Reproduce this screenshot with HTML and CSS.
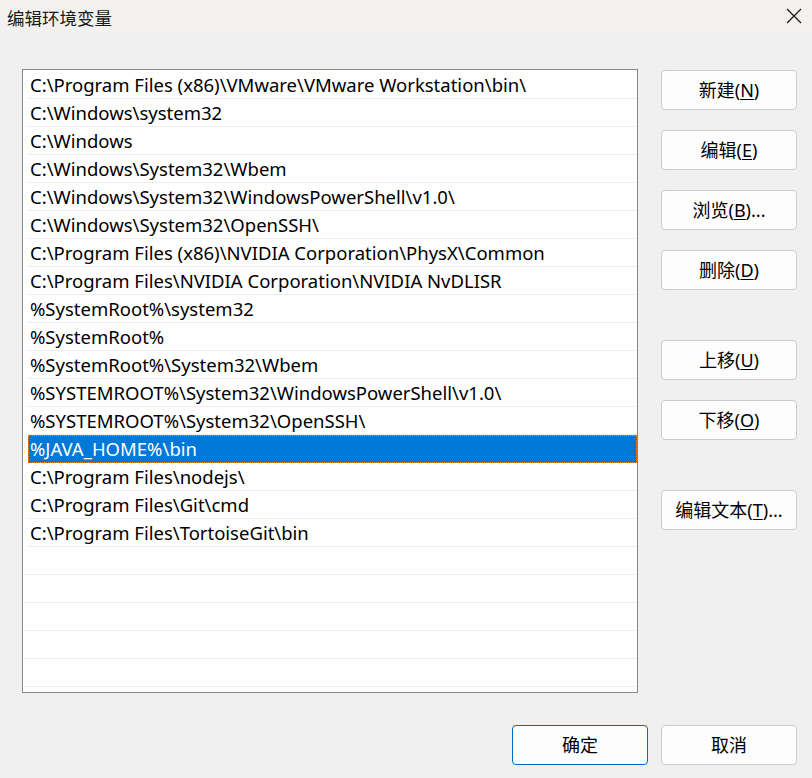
FILE: index.html
```html
<!DOCTYPE html>
<html lang="zh-CN">
<head>
    <meta charset="UTF-8">
    <meta name="viewport" content="width=device-width, initial-scale=1.0">
    <title>编辑环境变量</title>
    <link rel="stylesheet" href="styles.css">
</head>
<body>
    <div class="dialog">
        <div class="titlebar">
            <span class="title">编辑环境变量</span>
            <svg class="close" width="16" height="16" viewBox="0 0 16 16">
                <path d="M1 1 L15 15 M15 1 L1 15" stroke="#1a1a1a" stroke-width="1.3" fill="none"/>
            </svg>
        </div>

        <div class="content">
            <div class="path-list">
                <div class="row">C:\Program Files (x86)\VMware\VMware Workstation\bin\</div>
                <div class="row">C:\Windows\system32</div>
                <div class="row">C:\Windows</div>
                <div class="row">C:\Windows\System32\Wbem</div>
                <div class="row">C:\Windows\System32\WindowsPowerShell\v1.0\</div>
                <div class="row">C:\Windows\System32\OpenSSH\</div>
                <div class="row">C:\Program Files (x86)\NVIDIA Corporation\PhysX\Common</div>
                <div class="row">C:\Program Files\NVIDIA Corporation\NVIDIA NvDLISR</div>
                <div class="row">%SystemRoot%\system32</div>
                <div class="row">%SystemRoot%</div>
                <div class="row">%SystemRoot%\System32\Wbem</div>
                <div class="row">%SYSTEMROOT%\System32\WindowsPowerShell\v1.0\</div>
                <div class="row">%SYSTEMROOT%\System32\OpenSSH\</div>
                <div class="row selected">%JAVA_HOME%\bin</div>
                <div class="row">C:\Program Files\nodejs\</div>
                <div class="row">C:\Program Files\Git\cmd</div>
                <div class="row">C:\Program Files\TortoiseGit\bin</div>
                <div class="row empty"></div>
                <div class="row empty"></div>
                <div class="row empty"></div>
                <div class="row empty"></div>
                <div class="row empty"></div>
                <div class="row empty"></div>
            </div>

            <div class="side-buttons">
                <button class="btn">新建(<u>N</u>)</button>
                <button class="btn">编辑(<u>E</u>)</button>
                <button class="btn">浏览(<u>B</u>)...</button>
                <button class="btn">删除(<u>D</u>)</button>
                <button class="btn group-start">上移(<u>U</u>)</button>
                <button class="btn">下移(<u>O</u>)</button>
                <button class="btn group-start">编辑文本(<u>T</u>)...</button>
            </div>
        </div>

        <div class="footer">
            <button class="btn default">确定</button>
            <button class="btn">取消</button>
        </div>
    </div>
</body>
</html>
```

FILE: styles.css
```css
body {
    margin: 0;
    background-color: #f0f0f0;
    font-family: "Noto Sans", "Noto Sans CJK SC", sans-serif;
    color: #000;
}
.dialog {
    width: 812px;
    height: 778px;
    display: flex;
    flex-direction: column;
}
.titlebar {
    height: 38px;
    background-color: #f3f1ef;
    display: flex;
    align-items: center;
    justify-content: space-between;
    padding: 0 10px 0 7px;
    box-sizing: border-box;
}
.title {
    font-family: "Noto Sans CJK SC", sans-serif;
    font-size: 17.5px;
    color: #1a1a1a;
    margin-top: -4px;
}
.close {
    margin-top: -6px;
}
.content {
    display: flex;
    padding: 31px 0 0 22px;
    gap: 23px;
}
.path-list {
    width: 616px;
    height: 624px;
    box-sizing: border-box;
    border: 1px solid #828790;
    background-color: #fff;
    padding-top: 1px;
    overflow: hidden;
}
.row {
    height: 28px;
    box-sizing: border-box;
    border-bottom: 1px solid #ececec;
    margin-left: 5px;
    padding-left: 2px;
    font-size: 18.5px;
    line-height: 27px;
    white-space: nowrap;
}
.row.empty {
    margin-left: 1px;
}
.row.selected {
    background-color: #0078d7;
    border-bottom-color: #0078d7;
    color: #fff;
    outline: 1px dotted #f08a24;
    outline-offset: -1px;
}
.side-buttons {
    display: flex;
    flex-direction: column;
    gap: 20px;
    padding-top: 1px;
}
.btn {
    width: 136px;
    height: 40px;
    border: 1px solid #cccccc;
    border-radius: 4px;
    background-color: #fdfdfd;
    font-family: "Noto Sans", "Noto Sans CJK SC", sans-serif;
    font-size: 18px;
    color: #000;
    padding: 0 0 2px 0;
}
.btn u {
    text-underline-offset: 2px;
}
.btn.group-start {
    margin-top: 30px;
}
.btn.default {
    border-color: #0067c0;
}
.footer {
    display: flex;
    justify-content: flex-end;
    gap: 13px;
    padding: 32px 15px 0 0;
}
```
